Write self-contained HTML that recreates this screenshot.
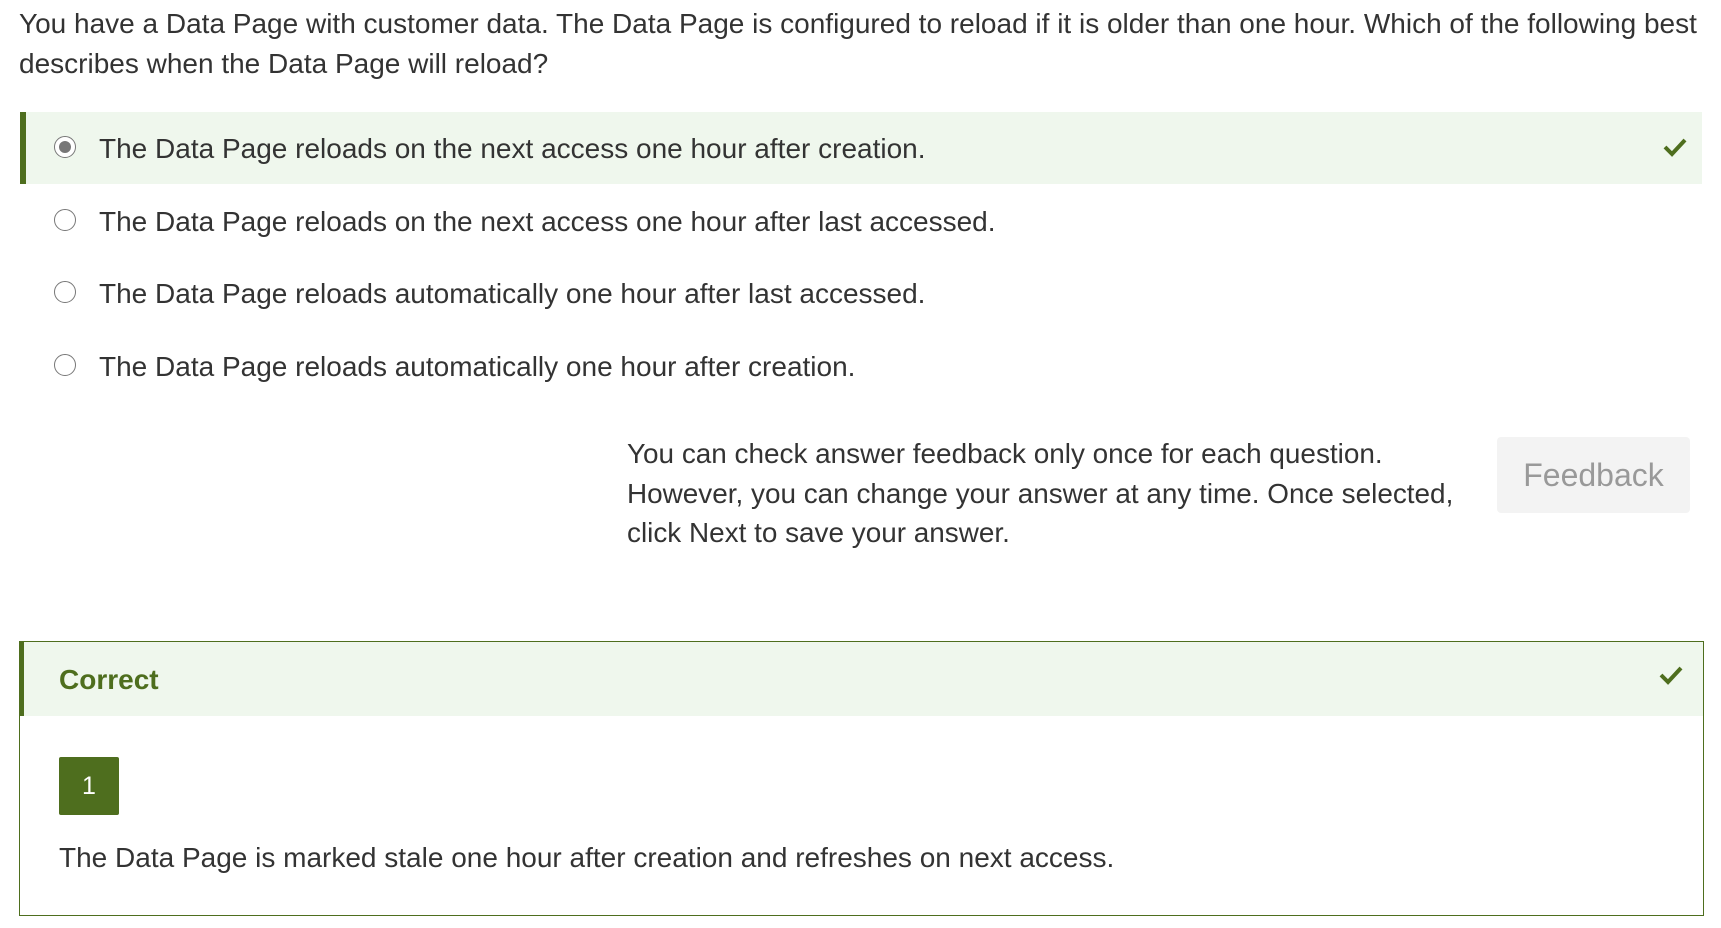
<!DOCTYPE html>
<html><head><meta charset="utf-8"><style>
body{margin:0;width:1721px;height:928px;background:#fff;font-family:"Liberation Sans",Arial,sans-serif;color:#333;position:relative;overflow:hidden}
.a{position:absolute}
.q{left:19px;top:4px;width:1700px;font-size:28px;line-height:39.5px}
.opt{left:20px;width:1682px;height:72px;font-size:28px}
.opt .r{position:absolute;left:34px;top:24px;width:22px;height:22px;border:1.5px solid #777;border-radius:50%;box-sizing:border-box;background:#fff}
.opt .t{position:absolute;left:79px;top:1px;line-height:72px}
.sel{background:#eff7ed;border-left:6px solid #4e6e1e;box-sizing:border-box}
.sel .r{left:28px}
.sel .t{left:73px}
.sel .r::after{content:"";position:absolute;left:3.5px;top:3.5px;width:12px;height:12px;border-radius:50%;background:#777}
.fb{left:627px;top:434px;font-size:27.9px;line-height:39.5px;width:850px}
.btn{left:1497px;top:437px;width:193px;height:76px;background:#f3f3f3;border-radius:4px;color:#999;font-size:32px;line-height:76px;text-align:center}
.box{left:19px;top:641px;width:1685px;height:275px;border:1px solid #4e6e1e;box-sizing:border-box}
.hd{left:19px;top:641px;width:1685px;height:75px;background:#eff7ed;border-left:5px solid #4e6e1e;box-sizing:border-box;border-top:1px solid #4e6e1e;border-right:1px solid #4e6e1e}
.ct{left:59px;top:642px;line-height:75px;font-size:28px;font-weight:bold;color:#4e6e1e}
.num{left:59px;top:757px;width:60px;height:58px;background:#4e6e1e;border-radius:2px;color:#fff;font-size:25px;line-height:58px;text-align:center}
.ex{left:59px;top:838px;font-size:28px;line-height:40px}
</style></head><body>
<div class="a q">You have a Data Page with customer data. The Data Page is configured to reload if it is older than one hour. Which of the following best describes when the Data Page will reload?</div>
<div class="a opt sel" style="top:112px"><span class="r"></span><span class="t">The Data Page reloads on the next access one hour after creation.</span>
<svg class="a" style="left:1637px;top:25px" width="24" height="20" viewBox="0 0 24 20"><path d="M2 10l7 7L22 3" fill="none" stroke="#4e6e1e" stroke-width="4"/></svg></div>
<div class="a opt" style="top:185px"><span class="r"></span><span class="t">The Data Page reloads on the next access one hour after last accessed.</span></div>
<div class="a opt" style="top:257px"><span class="r"></span><span class="t">The Data Page reloads automatically one hour after last accessed.</span></div>
<div class="a opt" style="top:330px"><span class="r"></span><span class="t">The Data Page reloads automatically one hour after creation.</span></div>
<div class="a fb">You can check answer feedback only once for each question. However, you can change your answer at any time. Once selected, click Next to save your answer.</div>
<div class="a btn">Feedback</div>
<div class="a box"></div>
<div class="a hd"></div>
<div class="a ct">Correct</div>
<svg class="a" style="left:1659px;top:665px" width="24" height="20" viewBox="0 0 24 20"><path d="M2 10l7 7L22 3" fill="none" stroke="#4e6e1e" stroke-width="4"/></svg>
<div class="a num">1</div>
<div class="a ex">The Data Page is marked stale one hour after creation and refreshes on next access.</div>
</body></html>
